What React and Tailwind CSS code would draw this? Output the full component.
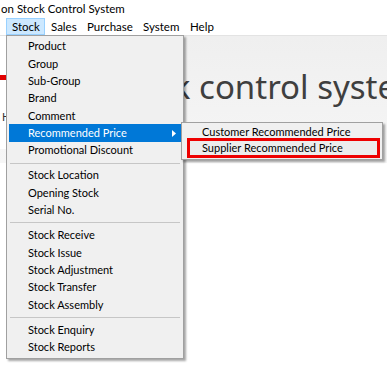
import React from "react";

const font = { fontFamily: "Lato, 'Noto Sans', sans-serif" };

const stockMenu = [
  "Product",
  "Group",
  "Sub-Group",
  "Brand",
  "Comment",
  "Recommended Price",
  "Promotional Discount",
  "-",
  "Stock Location",
  "Opening Stock",
  "Serial No.",
  "-",
  "Stock Receive",
  "Stock Issue",
  "Stock Adjustment",
  "Stock Transfer",
  "Stock Assembly",
  "-",
  "Stock Enquiry",
  "Stock Reports",
];

function MenuBar() {
  return (
    <div className="flex h-[17px] bg-white text-[11.5px] text-black leading-none">
      <div className="ml-[6px] flex w-[39px] items-center border border-[#99d1ff] bg-[#cce8ff] pl-[5px]">Stock</div>
      <div className="flex w-[36px] items-center pl-[6px]">Sales</div>
      <div className="flex w-[56px] items-center pl-[6px]">Purchase</div>
      <div className="flex w-[47px] items-center pl-[6px]">System</div>
      <div className="flex items-center pl-[6px]">Help</div>
    </div>
  );
}

function Dropdown() {
  return (
    <div className="absolute left-[6px] top-[35px] w-[178px] border border-[#a0a0a0] bg-[#f0f0f0] p-[2px] text-[11px] text-black shadow-[2px_2px_2px_rgba(0,0,0,0.35)]">
      {stockMenu.map((label, i) =>
        label === "-" ? (
          <div key={i} className="flex h-[8px] items-center px-[1px]">
            <div className="h-px w-full bg-[#c6c6c6]" />
          </div>
        ) : label === "Recommended Price" ? (
          <div key={i} className="flex h-[17.3px] items-center justify-between bg-[#0078d7] pl-[19px] pr-[5px] text-white">
            <span>{label}</span>
            <svg width="4" height="7" viewBox="0 0 4 7">
              <path d="M0 0 L4 3.5 L0 7 Z" fill="#ffffff" />
            </svg>
          </div>
        ) : (
          <div key={i} className="flex h-[17.3px] items-center pl-[19px]">
            {label}
          </div>
        )
      )}
    </div>
  );
}

function SubMenu() {
  return (
    <div className="absolute left-[181px] top-[122px] w-[202px] border border-[#a0a0a0] bg-[#f0f0f0] p-[1px] text-[11px] text-black shadow-[2px_2px_2px_rgba(0,0,0,0.35)]">
      <div className="flex h-[17px] items-center pl-[19px]">Customer Recommended Price</div>
      {/* red annotation box around the second entry */}
      <div className="relative -mt-[3px] ml-[4px] mr-[1px] flex h-[20px] items-center border-[3px] border-[#ee0000] bg-[#ececec] pl-[12px]">
        Supplier Recommended Price
      </div>
    </div>
  );
}

export default function App() {
  return (
    <div className="relative h-[365px] w-[387px] overflow-hidden bg-white" style={font}>
      <div className="flex h-[18px] items-center pl-[1px] text-[11.5px] text-black">on Stock Control System</div>
      <MenuBar />
      <div className="flex h-[128px] border-t border-[#e3e3e3] bg-gradient-to-b from-[#efefef] to-[#f6f6f6]">
        <div className="flex h-[113px] w-[110px] flex-col bg-white pt-[39px]">
          <div className="h-[5px] w-[90px] bg-[#e00000]" />
          <div className="mt-[29px] pl-[2px] text-[11px] text-[#333]">H</div>
        </div>
        <div className="ml-[17px] pt-[34px] text-[33px] leading-none text-[#3f3f3f] whitespace-nowrap" style={{ fontFamily: "'Noto Sans', sans-serif" }}>
          Stock control system
        </div>
      </div>
      <Dropdown />
      <SubMenu />
    </div>
  );
}
